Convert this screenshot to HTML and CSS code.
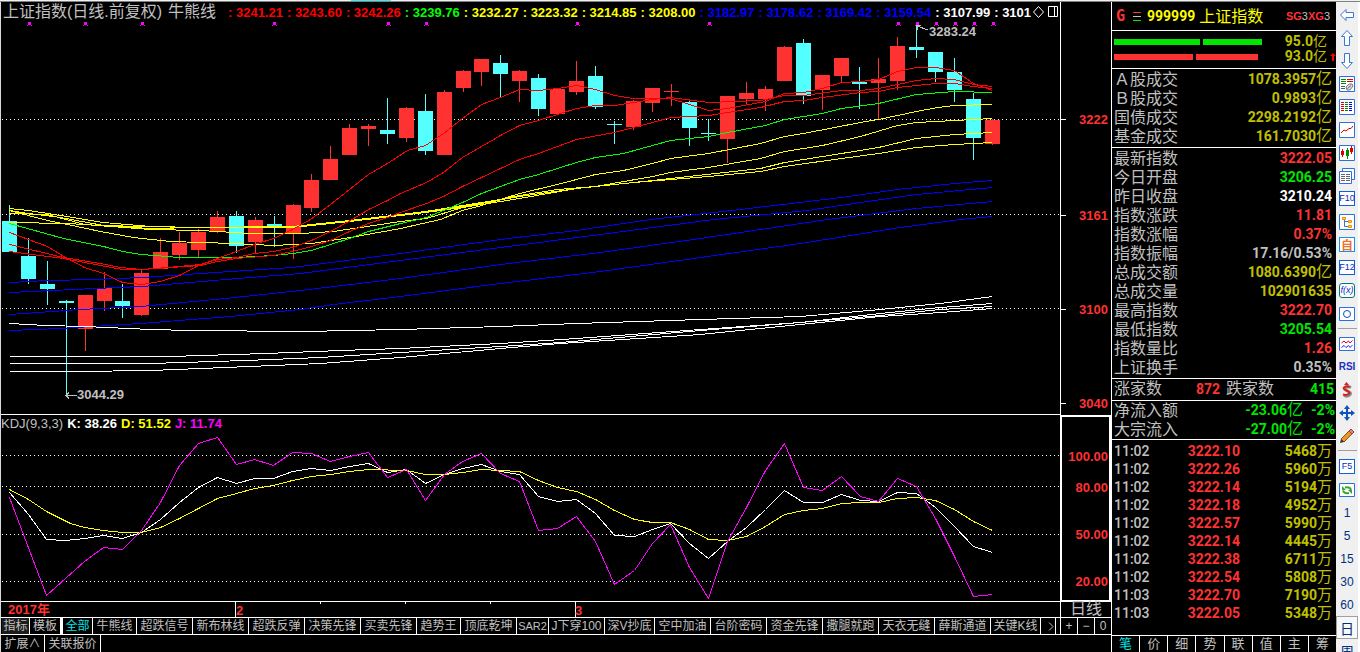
FILE: index.html
```
<!DOCTYPE html>
<html lang="zh-CN">
<head>
<meta charset="utf-8">
<title>上证指数 日线</title>
<link rel="stylesheet" href="styles.css">
</head>
<body>
<div class="progress"></div>
<div class="app">
  <main class="main">
    <section class="pane pane-price">
      <header class="legend">
        <h1 class="title"><span>上证指数(日线.前复权)</span><span>牛熊线</span></h1>
        <div class="values">
          <span class="ma-red">: 3241.21</span><span class="ma-red">: 3243.60</span><span class="ma-red">: 3242.26</span><span class="ma-green">: 3239.76</span><span class="ma-yellow">: 3232.27</span><span class="ma-yellow">: 3223.32</span><span class="ma-yellow">: 3214.85</span><span class="ma-yellow">: 3208.00</span><span class="ma-blue">: 3182.97</span><span class="ma-blue">: 3178.62</span><span class="ma-blue">: 3169.42</span><span class="ma-blue">: 3159.54</span><span class="ma-white">: 3107.99</span><span class="ma-white">: 3101</span>
        </div>
        <svg class="legend-icons" width="27" height="14" viewBox="0 0 27 14" fill="none" stroke="#fff"><path d="M6.500 1.500L11.500 7L6.500 12.500L1.500 7Z"/><path d="M16.500 1.500h9v10h-9zM22.500 1.500v10"/></svg>
      </header>
      <svg id="price" class="plot" viewBox="1 22 1059 392" preserveAspectRatio="none"></svg>
    </section>
    <svg class="axis axis-price" viewBox="1061 2 50 412" preserveAspectRatio="none">
      <path class="tick" d="M1061 119.500h5M1061 214.500h5M1061 308.500h5M1061 402.500h5"/>
      <text x="1108" y="124">3222</text><text x="1108" y="219">3161</text><text x="1108" y="313">3100</text><text x="1108" y="407">3040</text>
    </svg>
    <section class="pane pane-kdj">
      <header class="legend-kdj"><span class="name">KDJ(9,3,3)</span><b class="ma-white">K: 38.26</b><b class="ma-yellow">D: 51.52</b><b class="j">J: 11.74</b></header>
      <svg id="kdj" class="plot" viewBox="1 431 1059 170" preserveAspectRatio="none"></svg>
    </section>
    <svg class="axis axis-kdj" viewBox="1062 416 47 184" preserveAspectRatio="none">
      <text x="1108" y="460">100.00</text><text x="1108" y="491">80.00</text><text x="1108" y="539">50.00</text><text x="1108" y="586">20.00</text>
    </svg>
    <svg class="dates" viewBox="1 602 1059 15" preserveAspectRatio="none">
      <path class="tick" d="M235.500 602v15M575.500 602v15M320.500 602v2M405.500 602v2M490.500 602v2"/>
      <text x="8" y="614">2017年</text><text x="236" y="615">2</text><text x="575" y="615">3</text>
    </svg>
    <div class="period">日线</div>
    <nav class="tabs">
      <button class="w-28 shade">指标</button><button class="w-31">模板</button><button class="w-32 on">全部</button><button class="w-44">牛熊线</button><button class="w-56">超跌信号</button><button class="w-56">新布林线</button><button class="w-56">超跌反弹</button><button class="w-56">决策先锋</button><button class="w-56">买卖先锋</button><button class="w-44">趋势王</button><button class="w-56">顶底乾坤</button><button class="w-32 latin">SAR2</button><button class="w-56">J下穿100</button><button class="w-50">深V抄底</button><button class="w-56">空中加油</button><button class="w-56">台阶密码</button><button class="w-56">资金先锋</button><button class="w-56">撒腿就跑</button><button class="w-56">天衣无缝</button><button class="w-56">薛斯通道</button><button class="w-50">关键K线</button><button class="more" aria-label="更多"><svg width="6" height="9" viewBox="0 0 6 9" fill="none" stroke="#c0c0c0"><path d="M1 .5L5 4.500L1 8.500"/></svg></button>
    </nav>
    <div class="zoomers"><button>+</button><button>−</button><button>0</button></div>
    <nav class="tabs-low"><button class="w-44">扩展∧</button><button class="w-56">关联报价</button></nav>
  </main>

  <aside class="quote">
    <header class="q-head">
      <b class="g">G</b>
      <svg width="8" height="11" viewBox="0 0 8 11"><path stroke="#ff3232" d="M0 1.500h8"/><path stroke="#c0c0c0" d="M0 5.500h8"/><path stroke="#00e600" d="M0 9.500h8"/></svg>
      <b class="code">999999</b><span class="q-name">上证指数</span>
      <span class="sg"><b>SG</b>3<b>XG</b>3</span>
    </header>
    <div class="vol">
      <div class="vol-row up"><i class="b1"></i><i class="b2"></i><span class="num gold">95.0<em>亿</em></span></div>
      <div class="vol-row down"><i class="b1"></i><i class="b2"></i><span class="num gold">93.0<em>亿</em></span><svg class="arrow" width="6" height="8" viewBox="0 0 6 8" fill="#f00"><path d="M3 0L6 3H4V8H2V3H0Z"/></svg></div>
    </div>
    <table class="rows">
      <tr><th>Ａ股成交</th><td class="gold">1078.3957<em>亿</em></td></tr>
      <tr><th>Ｂ股成交</th><td class="gold">0.9893<em>亿</em></td></tr>
      <tr><th>国债成交</th><td class="gold">2298.2192<em>亿</em></td></tr>
      <tr><th>基金成交</th><td class="gold">161.7030<em>亿</em></td></tr>
    </table>
    <table class="rows">
      <tr><th>最新指数</th><td class="red">3222.05</td></tr>
      <tr><th>今日开盘</th><td class="green">3206.25</td></tr>
      <tr><th>昨日收盘</th><td class="white">3210.24</td></tr>
      <tr><th>指数涨跌</th><td class="red">11.81</td></tr>
      <tr><th>指数涨幅</th><td class="red">0.37%</td></tr>
      <tr><th>指数振幅</th><td>17.16/0.53%</td></tr>
      <tr><th>总成交额</th><td class="gold">1080.6390<em>亿</em></td></tr>
      <tr><th>总成交量</th><td class="gold">102901635</td></tr>
      <tr><th>最高指数</th><td class="red">3222.70</td></tr>
      <tr><th>最低指数</th><td class="green">3205.54</td></tr>
      <tr><th>指数量比</th><td class="red">1.26</td></tr>
      <tr><th>上证换手</th><td>0.35%</td></tr>
    </table>
    <div class="breadth"><span>涨家数</span><b class="num red">872</b><span>跌家数</span><b class="num green">415</b></div>
    <table class="rows flow">
      <tr><th>净流入额</th><td class="green">-23.06<em>亿</em></td><td class="green pct">-2%</td></tr>
      <tr><th>大宗流入</th><td class="green">-27.00<em>亿</em></td><td class="green pct">-2%</td></tr>
    </table>
    <div class="ticks">
      <table>
        <tr><td class="time">11:02</td><td class="red">3222.10</td><td class="gold">5468<em>万</em></td></tr>
        <tr><td class="time">11:02</td><td class="red">3222.26</td><td class="gold">5960<em>万</em></td></tr>
        <tr><td class="time">11:02</td><td class="red">3222.14</td><td class="gold">5194<em>万</em></td></tr>
        <tr><td class="time">11:02</td><td class="red">3222.18</td><td class="gold">4952<em>万</em></td></tr>
        <tr><td class="time">11:02</td><td class="red">3222.57</td><td class="gold">5990<em>万</em></td></tr>
        <tr><td class="time">11:02</td><td class="red">3222.14</td><td class="gold">4445<em>万</em></td></tr>
        <tr><td class="time">11:02</td><td class="red">3222.38</td><td class="gold">6711<em>万</em></td></tr>
        <tr><td class="time">11:02</td><td class="red">3222.54</td><td class="gold">5808<em>万</em></td></tr>
        <tr><td class="time">11:03</td><td class="red">3222.70</td><td class="gold">7190<em>万</em></td></tr>
        <tr><td class="time">11:03</td><td class="red">3222.05</td><td class="gold">5348<em>万</em></td></tr>
      </table>
    </div>
    <nav class="q-tabs"><button class="on">笔</button><button>价</button><button>细</button><button>势</button><button>联</button><button>值</button><button>主</button><button>筹</button></nav>
  </aside>

  <aside class="tools">
    <button aria-label="后退"><svg viewBox="0 0 16 16"><path class="arr" d="M1.500 8L7 2.500V5.500H14.500V10.500H7V13.500Z"/></svg></button>
    <button aria-label="上移"><svg viewBox="0 0 16 16"><path class="arr" d="M8 .5L13.500 6.500H10.500V15.500H5.500V6.500H2.500Z"/></svg></button>
    <button aria-label="下移"><svg viewBox="0 0 16 16"><path class="arr" d="M8 15.500L13.500 9.500H10.500V.5H5.500V9.500H2.500Z"/></svg></button>
    <button aria-label="自选"><svg viewBox="0 0 16 16"><path class="box" d="M.5 .5h15v15H.5z"/><path stroke="#080" d="M2 3.500h5M2 5.500h5M2 7.500h5"/><path stroke="#d00" d="M8 3.500h6M8 5.500h6"/><path stroke="#555" d="M2 10.500h4M2 12.500h4"/><path d="M7 11L10 8L13 8L14 10L11 14L8 14Z" stroke="#777" fill="#ddd"/><path d="M8.500 12.500L12 9.500" stroke="#666"/></svg></button>
    <button aria-label="报价"><svg viewBox="0 0 16 16"><path class="box" d="M.5 .5h15v15H.5z"/><path stroke="#d00" d="M2 3.500h3M2 5.500h3M2 7.500h3M2 9.500h3M2 11.500h3"/><path stroke="#080" d="M6 3.500h3M6 5.500h3M6 7.500h3M6 9.500h3M6 11.500h3"/><path stroke="#00d" d="M10 3.500h3M10 5.500h3M10 7.500h3M10 9.500h3M10 11.500h3"/></svg></button>
    <button aria-label="分时"><svg viewBox="0 0 16 16"><path class="box" d="M.5 .5h15v15H.5z"/><path stroke="#d00" fill="none" d="M2 11L5 8L7 9L10 6.500L12 6.500L14 4"/></svg></button>
    <button aria-label="K线"><svg viewBox="0 0 16 16"><path class="box" d="M.5 .5h15v15H.5z"/><path stroke="#d00" d="M3.500 4v8M12.500 1v8"/><path stroke="#080" d="M8.500 3v11"/><path fill="#d00" d="M2 6h3v4H2zM11 3h3v4h-3z"/><path fill="#080" d="M7 5h3v6H7z"/></svg></button>
    <button aria-label="资讯"><svg viewBox="0 0 16 16"><path class="box" d="M3.500 .5h12v11h-12z"/><path class="box" d="M.5 3.500h12v12H.5z"/><path stroke="#666" d="M2 6.500h4M7 6.500h4M2 8.500h4M7 8.500h4M2 10.500h4M7 10.500h4M2 12.500h4M7 12.500h4"/></svg></button>
    <button><span class="f">F10</span></button>
    <button aria-label="树形"><svg viewBox="0 0 16 16"><path class="box" d="M.5 .5h15v15H.5z"/><path stroke="#37c" fill="none" d="M5.500 6v6.500H9M5.500 7.500H9"/><path fill="#ffd34d" stroke="#f09000" d="M3.500 3.500h3v2h-3zM9.500 6.500h3v2h-3zM9.500 11.500h3v2h-3z"/></svg></button>
    <button><span class="f own">自</span></button>
    <button><span class="f">F12</span></button>
    <button><span class="f fx">f(x)</span></button>
    <button aria-label="圆"><svg viewBox="0 0 16 16"><path class="box" d="M.5 1.500h15v13H.5z"/><circle cx="8" cy="8" r="3.500" fill="none" stroke="#0a50c0"/></svg></button>
    <hr>
    <button aria-label="叠加"><svg viewBox="0 0 16 16"><path class="box" d="M.5 1.500h15v13H.5z"/><path stroke="#d00" fill="none" d="M2.500 7L5 5L7 7L9.500 5L11 7L13.500 4.500"/><path stroke="#22f" fill="none" d="M2.500 11.500L5 9.500L7 11.500L9.500 9.500L11 11.500L13.500 9"/></svg></button>
    <button class="rsi">RSI</button>
    <button aria-label="资金"><svg viewBox="0 0 16 16"><path fill="none" stroke="#888" stroke-width="3" d="M12 5.500Q9 4 6.500 5.500T8.500 9T10.500 13T5 13.500"/><path fill="none" stroke="#d82020" stroke-width="2" d="M10.500 5Q8 3.500 5.500 5T7.500 8.500T9.500 12T4 12.500"/><path fill="#d82020" d="M7.500 0L10 3H5Z"/></svg></button>
    <button aria-label="移动"><svg viewBox="0 0 16 16" fill="#1050c0"><path d="M8 0L11 4H9V7H12V5L16 8L12 11V9H9V12H11L8 16L5 12H7V9H4V11L0 8L4 5V7H7V4H5Z"/></svg></button>
    <button aria-label="画线"><svg viewBox="0 0 16 16"><path fill="#e8962a" stroke="#8a5418" d="M2 11L10 3L13 6L5 14Z"/><path fill="#e08080" stroke="#a04848" d="M10 3L12 1L15 4L13 6Z"/><path fill="#333" d="M1 15L2 11L5 14Z"/></svg></button>
    <hr class="tall">
    <button><span class="f">F5</span></button>
    <button aria-label="刷新"><svg viewBox="0 0 16 16"><path class="box" d="M.5 1.500h15v13H.5z"/><path fill="none" stroke="#35a835" stroke-width="2" d="M12 8Q11 4.500 6 5.500M4 8.500Q5 12 10 11"/><path fill="#35a835" d="M3 4v4h4zM13 12V8H9z"/></svg></button>
    <button>1</button><button>5</button><button>15</button><button>30</button><button>60</button>
    <button class="pressed">日</button><button class="cjk">周</button>
  </aside>
</div>
<script src="app.js"></script>
</body>
</html>
```
FILE: styles.css
```
* { box-sizing: border-box; }
body {
  margin: 0;
  height: 100vh;
  overflow: hidden;
  background: #000;
  color: #c0c0c0;
  font-family: "Liberation Sans", "Noto Sans CJK SC", sans-serif;
  display: flex;
  flex-direction: column;
}
button {
  margin: 0;
  padding: 0;
  border: 0;
  background: none;
  color: inherit;
  font: inherit;
  white-space: nowrap;
}
svg { display: block; }
.progress {
  flex: none;
  height: 2px;
  border-bottom: 1px solid #808080;
  background: linear-gradient(90deg, #f0f0f0 351px, #40e8f0 351px, #40e8f0 391px, #f0f0f0 391px);
}
.app {
  flex: 1;
  min-height: 0;
  display: grid;
  grid-template-columns: minmax(0, 1fr) 225px 24px;
  border-left: 1px solid #d8d8d8;
}
.main {
  min-height: 0;
  display: grid;
  grid-template-columns: minmax(0, 1fr) 51px;
  grid-template-rows: minmax(0, 413fr) minmax(0, 187fr) 15px 18px 17px;
}
.pane {
  display: flex;
  flex-direction: column;
  min-height: 0;
  min-width: 0;
  border-bottom: 1px solid #fff;
}
.plot { flex: 1; width: 100%; min-height: 0; shape-rendering: crispEdges; }
.legend { display: flex; align-items: center; height: 20px; flex: none; padding-left: 2px; }
.title { margin: 0; width: 225px; flex: none; display: flex; gap: 6px; font-size: 16px; line-height: 20px; font-weight: 400; white-space: nowrap; }
.values { display: flex; gap: 4px; flex: 1; min-width: 0; overflow: hidden; font-size: 13px; font-weight: 700; white-space: nowrap; }
.legend-icons { flex: none; margin-right: 1px; }
.ma-red { color: #f00; }
.ma-green { color: #0f0; }
.ma-yellow { color: #ff0; }
.ma-blue { color: #00f; }
.ma-white { color: #fff; }
.j { color: #f0f; }
.legend-kdj { flex: none; height: 16px; line-height: 17px; display: flex; gap: 4px; font-size: 13px; }
.axis { width: 100%; height: 100%; border-left: 1px solid #fff; }
.axis text, .dates text { font-size: 13px; font-weight: 700; fill: #ff3232; }
.axis text { text-anchor: end; }
.tick { stroke: #fff; shape-rendering: crispEdges; }
.axis-kdj { border: 2px solid #fff; }
.dates { width: 100%; height: 100%; }
.period { border-left: 1px solid #fff; text-align: center; font-size: 16px; line-height: 14px; }
.tabs, .zoomers, .tabs-low { display: flex; font-size: 12px; line-height: 16px; }
.tabs, .zoomers { border-top: 1px solid #fff; border-bottom: 1px solid #fff; }
.tabs { padding-left: 1px; overflow: hidden; }
.tabs button, .tabs-low button { flex: none; border-right: 1px solid #fff; }
.tabs .shade { background: #1c1c1c; }
.tabs .on { border-left: 2px solid #fff; color: #00e6e6; }
.tabs .latin { font-size: 11px; }
.w-28 { width: 28px; }
.w-31 { width: 31px; }
.w-32 { width: 32px; }
.w-44 { width: 44px; }
.w-50 { width: 50px; }
.w-56 { width: 56px; }
.tabs .more { width: 15px; display: flex; align-items: center; justify-content: flex-end; padding-right: 1px; }
.zoomers { border-left: 1px solid #fff; }
.zoomers button { flex: 1; border-right: 1px solid #fff; }
.zoomers button:last-child { border-right: 0; }
.tabs-low { grid-column: 1 / -1; }

.quote { border-left: 1px solid #fff; display: flex; flex-direction: column; min-height: 0; font-size: 16px; line-height: 19px; }
.num, .rows td, .ticks td { font-family: Roboto, sans-serif; font-size: 14px; font-weight: 700; }
em { font-family: "Noto Sans CJK SC", sans-serif; font-size: 16px; font-style: normal; font-weight: 400; line-height: 0; }
.vol em { font-size: 14px; }
.ticks em { font-size: 15px; }
.red { color: #ff3232; }
.green { color: #00e600; }
.gold { color: #c0c000; }
.white { color: #fff; }
.q-head { height: 29px; flex: none; border-bottom: 1px solid #fff; display: flex; align-items: center; padding: 0 6px 0 4px; }
.g { color: #ff3232; width: 17px; font-family: "DejaVu Sans Mono", monospace; font-size: 15px; }
.code { color: #ff0; font-family: Roboto, sans-serif; font-size: 14px; margin: 0 4px 0 6px; }
.q-name { color: #ff0; flex: 1; }
.sg { font-size: 11px; }
.sg b { color: #ff3232; }
.vol { flex: none; height: 38px; padding: 3px 0 0 2px; border-bottom: 1px solid #fff; }
.vol-row { height: 15px; line-height: 15px; display: flex; align-items: center; }
.vol-row i { height: 6px; margin-right: 3px; }
.up i { background: #00e600; }
.down i { background: #ff3232; }
.up .b1 { width: 86px; }
.up .b2 { width: 59px; }
.down .b1 { width: 79px; }
.down .b2 { width: 62px; }
.vol-row .num { margin-left: auto; margin-right: 9px; }
.down .num { margin-right: 3px; }
.arrow { flex: none; }
table { border-collapse: collapse; width: 100%; }
.rows { flex: none; border-collapse: separate; border-spacing: 0; padding: 1px 4px 1px 2px; border-bottom: 1px solid #fff; }
th, td { padding: 0; text-align: left; font-weight: 400; white-space: nowrap; }
.rows tr { height: 19px; }
.rows td { text-align: right; }
.breadth { flex: none; height: 22px; line-height: 20px; display: flex; padding: 0 2px; border-bottom: 1px solid #fff; }
.breadth .red { width: 58px; text-align: right; margin-right: 6px; }
.breadth .green { flex: 1; text-align: right; }
.flow { padding: 0 1px 0 2px; }
.flow .pct { width: 32px; }
.ticks { flex: 1; min-height: 0; overflow: hidden; padding: 2px 4px 0 2px; line-height: 18px; }
.ticks tr { height: 18px; }
.ticks td { text-align: right; }
.ticks .time { text-align: left; width: 40px; font-weight: 500; }
.ticks .red { width: 86px; }
.q-tabs { flex: none; height: 17px; border-top: 1px solid #fff; display: flex; font-size: 13px; line-height: 16px; }
.q-tabs button { flex: 1; border-right: 1px solid #fff; }
.q-tabs button:last-child { border-right: 0; }
.q-tabs .on { color: #00e6e6; }

.tools { background: #f0f0f0; border-right: 2px solid #fff; display: flex; flex-direction: column; align-items: center; overflow: hidden; padding-top: 1px; }
.tools button { flex: none; width: 22px; height: 23px; display: flex; align-items: center; justify-content: center; color: #003080; font-size: 12px; }
.tools svg { width: 16px; height: 16px; }
.tools hr { flex: none; width: 19px; height: 1px; margin: 3px 0; border: 0; background: #a0a0a0; }
.tools .tall { margin-bottom: 4px; }
.arr { fill: #fff; stroke: #3a78d8; }
.box { fill: #fff; stroke: #2a70e0; }
.f { width: 16px; height: 15px; border: 1px solid #1060d8; background: #fff; color: #0030c0; font-family: "Liberation Sans", sans-serif; font-size: 9px; line-height: 13px; display: flex; justify-content: center; }
.f.own { color: #f07030; border-color: #1890f0; font-family: "Noto Sans CJK SC", sans-serif; font-size: 12px; font-weight: 700; }
.f.fx { border-color: #007878; border-radius: 3px; font-style: italic; }
.tools .rsi { color: #2030c0; font-size: 10px; font-weight: 700; }
.tools .pressed { border: 1px solid #a0a0a0; background: #f8f8f8; font-size: 14px; }
.tools .cjk { font-size: 14px; }
```
FILE: app.js
```
const NS = 'http://www.w3.org/2000/svg';
const add = (parent, tag, attrs, text) => {
  const el = document.createElementNS(NS, tag);
  for (const k in attrs) el.setAttribute(k, attrs[k]);
  if (text) el.textContent = text;
  parent.appendChild(el);
  return el;
};
const gridLine = (svg, y) => add(svg, 'path', { d: `M2 ${y + 0.5}H1059`, stroke: '#fff', 'stroke-dasharray': '1 3' });
const line = (svg, color, points) => add(svg, 'polyline', { points, fill: 'none', stroke: color, transform: 'translate(.5 .5)' });

const UP = '#ff3232', DOWN = '#54ffff';
// direction, high, body top, body bottom, low
const candles = [
  'C 205 221 252 252', 'C 238 256 279 284', 'C 261 284 289 305', 'C 300 301 303 395', 'R 295 295 329 351',
  'R 272 288 301 311', 'C 284 301 306 318', 'R 270 273 315 316', 'R 238 252 269 269', 'R 232 243 255 260',
  'R 229 232 250 257', 'R 211 217 232 233', 'C 211 216 246 253', 'R 217 220 242 254', 'C 216 224 226 247',
  'R 204 205 233 259', 'R 174 180 208 212', 'R 146 159 180 180', 'R 124 128 155 155', 'R 124 126 129 146',
  'C 98 130 134 144', 'R 107 108 138 142', 'C 94 111 151 155', 'R 90 92 155 155', 'R 70 71 88 92',
  'R 59 59 72 86', 'C 55 63 74 98', 'R 70 71 81 102', 'C 74 78 109 116', 'R 88 89 114 115',
  'R 61 81 92 95', 'C 66 76 107 109', 'C 121 124 125 144', 'R 100 101 127 130', 'R 88 88 103 112',
  'R 84 91 92 106', 'C 101 102 128 146', 'C 119 133 134 141', 'R 96 96 139 163', 'R 82 93 99 105',
  'R 86 89 99 111', 'R 46 47 81 81', 'C 39 43 96 104', 'R 75 75 90 110', 'R 58 58 76 82',
  'C 67 82 84 109', 'R 58 79 83 119', 'R 37 46 81 90', 'C 25 47 50 58', 'C 52 52 72 82',
  'C 58 72 90 102', 'C 93 99 138 160', 'R 119 120 144 145'
];

const price = document.getElementById('price');
[119, 214, 308].forEach(y => gridLine(price, y));
candles.forEach((row, i) => {
  const [dir, high, top, bottom, low] = row.split(' ');
  const x = Math.round(9 + i * 18.9);
  const fill = dir === 'R' ? UP : DOWN;
  add(price, 'rect', { x, y: high, width: 1, height: low - high, fill });
  add(price, 'rect', { x: x - 7, y: top, width: 15, height: bottom - top, fill });
});

const averages = [
  ['#00f', '9,282 47,280 94,279 142,277 200,273 292,267 400,253 500,239 576,230 650,219 740,209 841,197 897,189 954,183 992,180'],
  ['#00f', '9,292 94,288 142,286 225,279 300,273 400,260 500,247 600,234 713,219 807,210 860,202 916,194 992,187'],
  ['#00f', '9,314 80,309 140,306 225,298 300,290 400,278 500,264 600,252 700,238 827,219 916,208 992,201'],
  ['#00f', '9,330 60,328 140,323 230,316 300,309 333,304 400,296 500,283 600,271 700,257 800,243 900,227 960,219 992,216'],
  ['#fff', '9,323 45,325 84,326 150,329 190,330 302,331 400,329 500,326 576,323 700,319 800,316 880,309 940,303 992,296'],
  ['#fff', '9,356 170,356 265,353 340,350 400,348 500,343 576,338 700,329 800,322 880,313 940,307 992,303'],
  ['#fff', '9,363 150,363 245,360 320,357 400,352 500,346 560,342 700,330 800,322 880,315 940,309 992,306'],
  ['#fff', '9,371 75,371 150,370 225,367 320,363 400,357 500,348 560,343 700,334 800,324 880,316 940,312 992,308'],
  ['#ff0', '9,208 28,210 60,215 103,222 150,226 198,227 292,226 349,220 400,214 425,211 462,205 519,196 576,188 633,182 708,176 760,171 784,166 841,158 878,153 916,147 954,144 992,142'],
  ['#ff0', '9,210 28,213 60,217 103,225 141,226 198,227 292,226 349,221 400,215 425,212 462,207 519,198 576,188 652,180 760,168 784,162 841,153 878,147 916,138 954,134 992,132'],
  ['#ff0', '9,213 47,214 84,224 150,229 200,230 250,233 300,233 333,231 400,221 426,218 462,207 481,203 519,195 557,189 595,186 652,176 670,172 708,167 760,158 784,151 822,145 860,136 897,125 916,122 954,120 992,118'],
  ['#ff0', '9,222 67,223 100,225 150,228 198,227 292,227 349,221 400,215 462,206 519,196'],
  ['#ff0', '9,210 47,220 67,224 100,231 133,237 170,241 233,243 273,245 311,243 350,237 400,228 440,219 462,210 481,205 519,193 557,184 595,174 623,170 652,163 670,158 708,153 760,143 784,136 803,133 860,122 878,119 916,111 937,107 954,105 992,104'],
  ['#0f0', '9,223 63,238 103,246 122,251 141,254 179,257 236,257 273,255 292,253 311,250 330,244 349,238 368,231 400,223 426,217 443,210 462,202 481,193 519,179 538,174 576,162 595,157 623,153 652,145 670,140 708,136 727,132 765,125 784,119 822,113 841,108 878,103 916,94 954,91 992,92'],
  ['#f00', '9,232 28,239 47,246 65,257 84,267 103,273 122,282 141,284 160,281 179,275 198,265 217,258 236,251 254,244 273,238 292,229 310,219 330,204 349,189 368,174 387,163 407,150 425,145 443,133 462,118 481,104 500,97 519,89 538,90 557,88 576,85 595,89 614,95 633,98 670,98 689,104 708,110 727,108 765,101 784,93 803,92 822,88 841,82 860,81 878,79 897,71 916,67 935,67 954,70 973,83 992,90'],
  ['#f00', '9,244 63,257 100,263 120,267 141,269 167,267 200,264 217,259 236,257 254,253 273,251 292,247 311,240 330,231 350,220 368,209 387,200 400,193 426,182 443,172 462,157 481,146 500,135 519,125 538,120 557,114 576,108 595,105 614,105 652,99 670,97 708,102 760,100 784,95 803,95 841,90 860,90 878,88 897,84 916,80 935,78 954,79 973,84 992,86'],
  ['#f00', '9,251 47,256 63,258 100,265 122,269 141,269 200,265 217,261 236,258 273,255 292,251 311,246 330,240 349,231 368,223 387,217 400,212 426,203 443,196 462,186 481,177 500,168 519,159 538,153 576,139 614,132 652,122 670,117 708,115 727,112 760,107 784,101 803,100 822,97 860,92 878,91 897,87 935,83 954,83 973,86 992,88']
];
averages.forEach(([color, points]) => line(price, color, points));

[29, 85, 142, 274, 388, 426, 577, 709, 898, 917, 936, 955, 974, 993].forEach(x =>
  add(price, 'path', { fill: '#f0f', d: `M${x - 1} 22h3v3h-3zM${x - 2} 21h1v1h-1zM${x + 2} 21h1v1h-1zM${x - 2} 25h1v1h-1zM${x + 2} 25h1v1h-1z` }));

const callouts = { fill: '#c0c0c0', 'font-size': 13, 'font-weight': 700 };
add(price, 'text', { ...callouts, x: 77, y: 399 }, '3044.29');
add(price, 'text', { ...callouts, x: 929, y: 36 }, '3283.24');
add(price, 'path', { stroke: '#c0c0c0', fill: 'none', d: 'M66 395.500H77M69 392.500L66 395.500L69 398.500M917 26L928 30M921 25.500H917V30' });

const kdj = document.getElementById('kdj');
[455, 486, 534, 581].forEach(y => gridLine(kdj, y));
line(kdj, '#fff', '9,492 28,514 46,539 65,540 84,538 103,535 122,538 141,532 160,519 179,502 198,487 217,477 236,483 254,478 273,478 292,471 311,468 330,470 349,466 368,463 387,472 406,469 425,483 444,474 462,468 481,464 500,471 519,474 538,496 557,501 576,499 595,513 614,535 634,536 652,529 670,523 689,543 708,558 727,541 746,527 765,509 784,490 803,502 822,502 841,494 860,500 878,501 897,492 916,493 935,507 954,526 973,546 992,552');
line(kdj, '#ff0', '9,489 28,499 46,511 70,523 84,527 103,530 122,532 141,532 160,527 179,518 198,508 217,498 236,493 254,488 273,485 292,480 311,476 330,474 349,471 368,469 406,470 425,474 444,474 462,472 481,469 500,470 519,471 538,480 557,487 576,491 595,499 614,510 634,519 652,522 670,522 689,529 708,539 727,540 746,536 765,526 784,514 803,510 822,508 841,503 860,502 878,502 897,498 916,497 935,500 954,509 973,521 992,530');
line(kdj, '#f0f', '9,497 46,595 65,578 84,561 103,547 122,549 141,530 160,502 179,465 198,443 217,437 236,464 254,459 273,465 292,452 311,453 330,461 349,456 368,452 387,477 406,469 425,500 444,474 462,461 481,453 500,473 519,481 538,530 557,528 576,516 595,541 614,584 634,570 652,543 670,524 689,567 708,598 727,541 746,507 765,470 784,443 803,487 822,490 841,476 860,496 878,501 897,478 916,486 935,518 954,556 973,596 992,594');
```
